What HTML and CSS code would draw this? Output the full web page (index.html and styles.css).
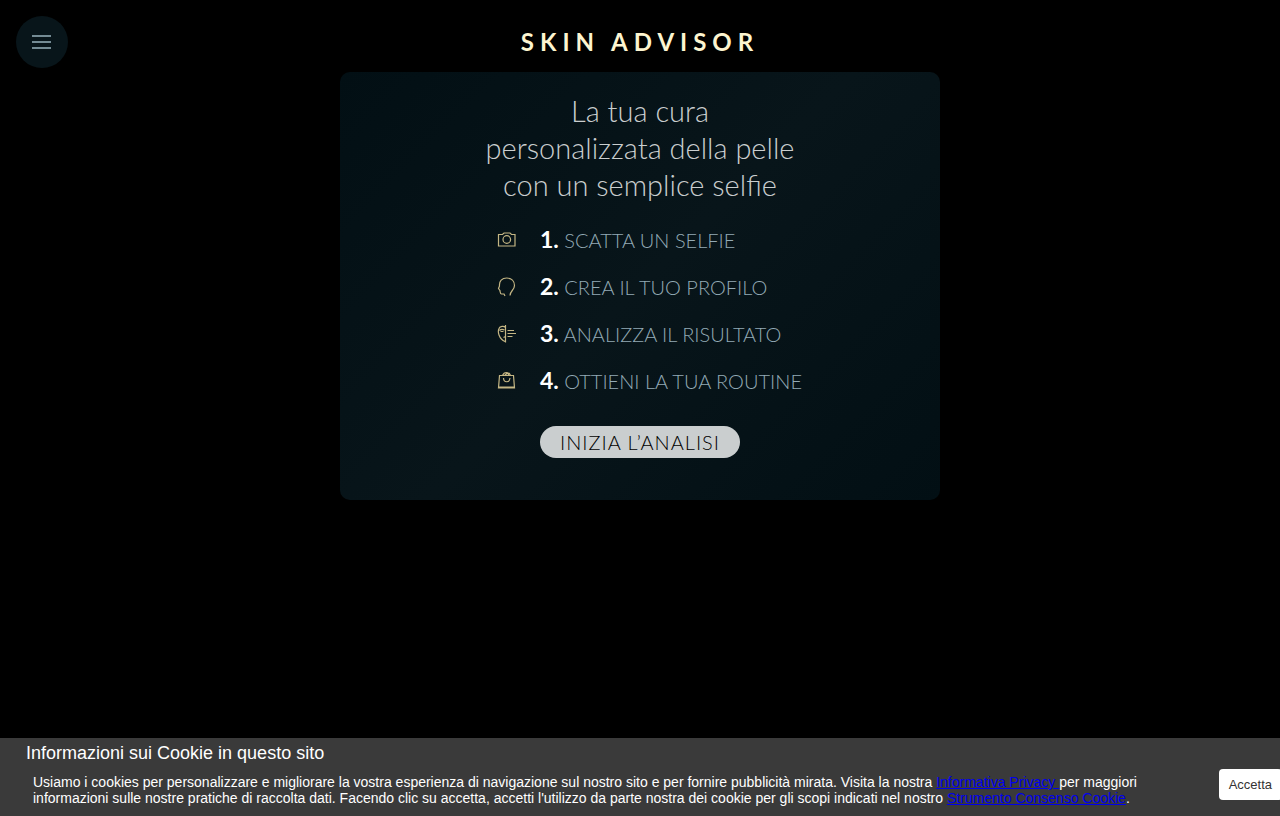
FILE: index.html
```html
<!DOCTYPE html>
<html lang="it">
<head>
<meta charset="utf-8">
<meta name="viewport" content="width=device-width, initial-scale=1">
<title>Skin Advisor</title>
<link rel="stylesheet" href="styles.css">
</head>
<body>
<header class="header">
  <button class="menu" type="button" aria-label="Menu">
    <svg width="20" height="14" viewBox="0 0 20 14" aria-hidden="true"><path d="M0 1h19M0 7h19M0 13h19"/></svg>
  </button>
  <h1 class="brand">SKIN ADVISOR</h1>
</header>
<main class="card">
  <h2 class="headline">La tua cura<br>personalizzata della pelle<br>con un semplice selfie</h2>
  <ol class="steps">
    <li class="step">
      <span class="icon"><svg width="20" height="20" viewBox="0 0 20 20" aria-hidden="true"><path d="M1.500 4.500h4l1.500-1.500h6l1.500 1.500h3.500v11.500h-16.500z"/><circle cx="9.800" cy="9.500" r="3.800"/></svg></span>
      <span class="label"><b class="num">1.</b> SCATTA UN SELFIE</span>
    </li>
    <li class="step">
      <span class="icon"><svg width="20" height="20" viewBox="0 0 20 20" aria-hidden="true"><path d="M8 19L7 17H4.500C3 17 3.300 15 2.900 13.500L1.500 11.500L2.500 9C2 4 5 1 9.800 1C14.500 1 17.500 4 17.500 8.500C17.500 13 13 14 13 18.500"/></svg></span>
      <span class="label"><b class="num">2.</b> CREA IL TUO PROFILO</span>
    </li>
    <li class="step">
      <span class="icon"><svg width="20" height="20" viewBox="0 0 20 20" aria-hidden="true"><path d="M8.500 1v17.500M8.500 3.500C7 1.800 3 2 2 4.500C.8 7 1.300 9 2 11C3 13.700 5.500 16.500 8 17.500M2.500 6.500C4 5 5.500 5 7.500 6M3.500 7.500h3M6.500 13.500l2-1M10.500 6.500h6.500M10.500 9.500h8.500M10.500 12.500h5"/></svg></span>
      <span class="label"><b class="num">3.</b> ANALIZZA IL RISULTATO</span>
    </li>
    <li class="step">
      <span class="icon"><svg width="20" height="20" viewBox="0 0 20 20" aria-hidden="true"><path d="M2.500 4.500h14l1 12.500H1.500zM1.500 16h16M5.500 4.500C7 .500 12 .500 13.500 4.500M7.500 4.500L10.500 2l1.500 2.500M6.500 7c.3 5 6 5 6.500 0"/></svg></span>
      <span class="label"><b class="num">4.</b> OTTIENI LA TUA ROUTINE</span>
    </li>
  </ol>
  <button class="start" type="button">INIZIA L’ANALISI</button>
</main>
<section class="cookies" aria-labelledby="cookie-title">
  <h2 class="cookie-title" id="cookie-title">Informazioni sui Cookie in questo sito</h2>
  <div class="cookie-row">
    <p class="cookie-text">Usiamo i cookies per personalizzare e migliorare la vostra esperienza di navigazione sul nostro sito e per fornire pubblicità mirata. Visita la nostra <a href="#privacy">Informativa Privacy </a>per maggiori informazioni sulle nostre pratiche di raccolta dati. Facendo clic su accetta, accetti l'utilizzo da parte nostra dei cookie per gli scopi indicati nel nostro <a href="#consenso">Strumento Consenso Cookie</a>.</p>
    <button class="accept" type="button">Accetta</button>
  </div>
</section>
</body>
</html>
```
FILE: styles.css
```css
* {
  box-sizing: border-box;
}

body {
  margin: 0;
  background: #000;
  font-family: Lato, sans-serif;
  overflow-x: hidden;
}

.header {
  display: grid;
  grid-template-columns: 52px 1fr 52px;
  align-items: center;
  padding: 16px 16px 4px;
}

.menu {
  display: flex;
  align-items: center;
  justify-content: center;
  width: 52px;
  height: 52px;
  padding: 0;
  border: 0;
  border-radius: 50%;
  background: #08151a;
}

.menu svg {
  fill: none;
  stroke: #748b94;
  stroke-width: 2;
}

.brand {
  margin: 0;
  color: #fdf5d0;
  font-size: 24px;
  font-weight: 700;
  line-height: 32px;
  letter-spacing: 6px;
  text-align: center;
}

.card {
  display: flex;
  flex-direction: column;
  align-items: center;
  max-width: 600px;
  margin: 0 auto;
  padding: 20px 16px 42px;
  border-radius: 10px;
  background: linear-gradient(135deg, #020f14 0%, #08151a 50%, #020f14 100%);
}

.headline {
  margin: 0 0 21px;
  color: #cacecf;
  font-size: 29px;
  font-weight: 300;
  line-height: 37px;
  text-align: center;
}

.steps {
  display: flex;
  flex-direction: column;
  gap: 15px;
  width: 300px;
  margin: 0 0 29px;
  padding: 0;
  list-style: none;
}

.step {
  display: flex;
  align-items: center;
  gap: 16px;
  height: 32px;
  color: #93aab5;
  font-size: 20px;
  font-weight: 300;
  line-height: 30px;
  white-space: nowrap;
}

.icon {
  display: flex;
  flex: none;
  align-items: center;
  justify-content: center;
  width: 34px;
  height: 32px;
}

.icon svg {
  fill: none;
  stroke: #c4b684;
  stroke-width: 1.2;
}

.num {
  color: #fff;
  font-size: 23px;
  font-weight: 700;
  line-height: 24px;
}

.start {
  height: 32px;
  padding: 0 20px;
  border: 0;
  border-radius: 16px;
  background: #cacecf;
  color: #000;
  font-family: inherit;
  font-size: 20px;
  font-weight: 300;
  letter-spacing: 1px;
}

.cookies {
  position: fixed;
  right: 0;
  bottom: 0;
  left: 0;
  padding: 5px 0 10px;
  background: #3a3a3a;
  color: #fff;
  font-family: "Liberation Sans", Arial, sans-serif;
  overflow: hidden;
}

.cookie-title {
  margin: 0 0 5px 26px;
  font-size: 18px;
  font-weight: 400;
  line-height: 21px;
}

.cookie-row {
  display: flex;
  align-items: flex-start;
  justify-content: space-between;
  margin-right: -2px;
  padding-left: 33px;
}

.cookie-text {
  flex: 0 1 1120px;
  margin: 5px 0 0;
  font-size: 14px;
  line-height: 16px;
}

.cookie-text a {
  color: #00e;
}

.accept {
  flex: none;
  height: 31px;
  padding: 0 10px;
  border: 0;
  border-radius: 4px;
  background: #fff;
  color: #333;
  font-family: inherit;
  font-size: 13px;
}
```
